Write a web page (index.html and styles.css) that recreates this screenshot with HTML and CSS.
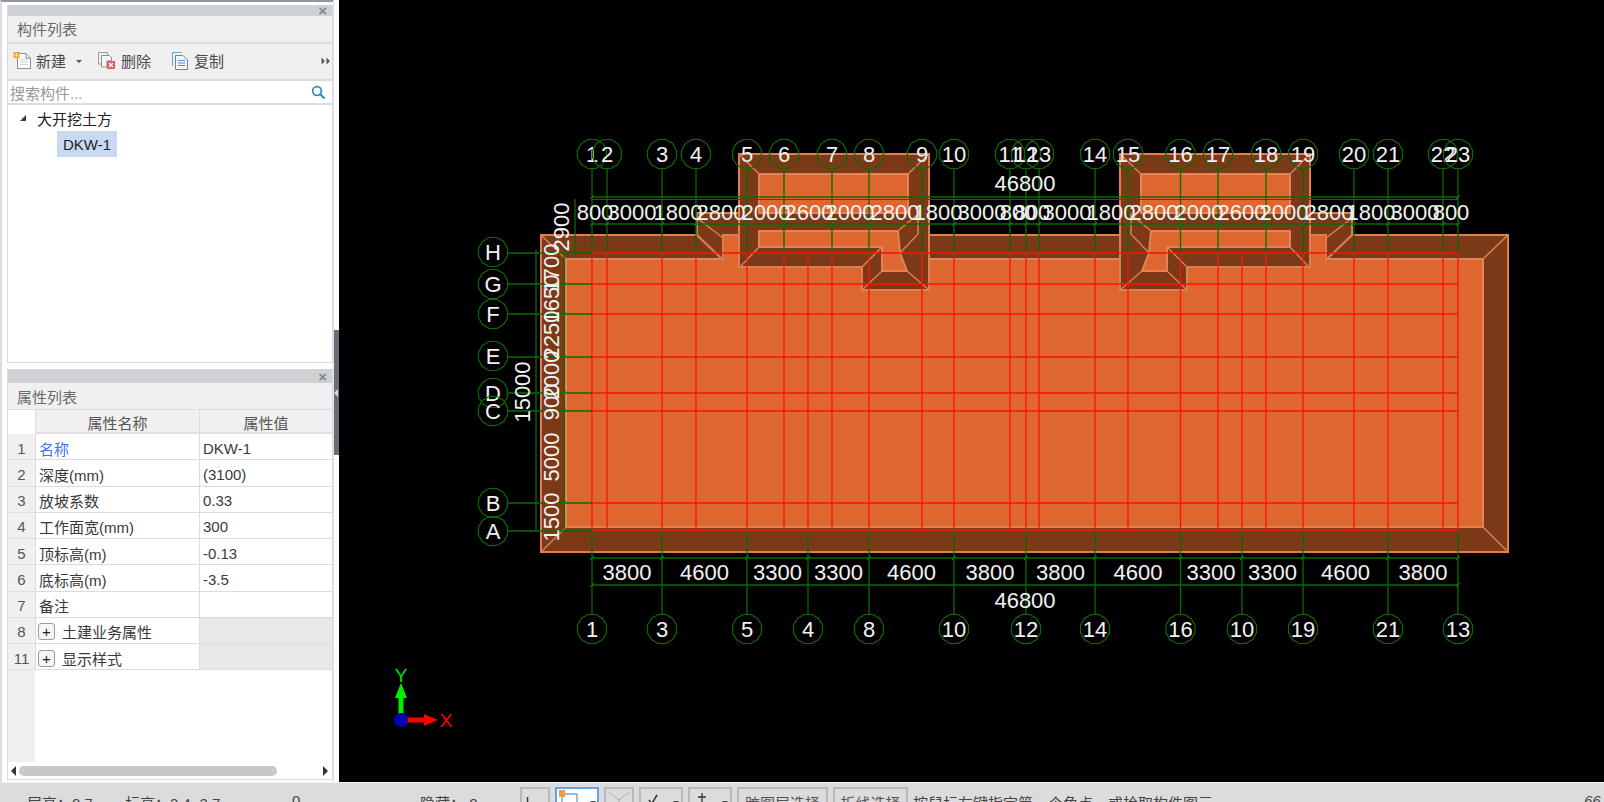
FILE: index.html
```html
<!DOCTYPE html>
<html lang="zh-CN">

<head>
  <meta charset="UTF-8" />
  <title>构件列表</title>
  <link rel="stylesheet" href="styles.css">
</head>

<body>
  <div class="app">
    <div class="main">
      <div class="sidebar">
        <!-- Component list -->
        <div class="panel panel-list">
          <div class="panel-head"><span class="panel-close">×</span></div>
          <div class="panel-title">构件列表</div>
          <div class="toolbar">
            <div class="tool">
              <svg class="tool-icon" width="19" height="19" viewBox="0 0 19 19">
                <path d="M4.5 2.5H13L17.5 7V17.5H4.5Z" fill="#fbfbfb" stroke="#8d8d8d" />
                <path d="M7 8.5H15M7 11H15M7 13.500H15" stroke="#d5d5d5" />
                <path d="M13 2.500V7H17.5" fill="#e6e6e6" stroke="#8d8d8d" />
                <rect x="0.500" y="1" width="6" height="6" fill="#f6a23c" />
                <path d="M1.500 4H5.500M3.500 2V6" stroke="#ffe2a8" />
              </svg>
              <span>新建</span>
              <span class="tool-caret"></span>
            </div>
            <div class="tool tool-del">
              <svg class="tool-icon" width="18" height="18" viewBox="0 0 18 18">
                <path d="M0.500 0.500H9.500V3M0.500 0.500V12H3" fill="none" stroke="#9a9a9a" />
                <path d="M3.500 3.500H11.500L13.500 5.500V9H9V15H3.500Z" fill="#f6f6f6" stroke="#8d8d8d" />
                <rect x="9" y="9" width="8" height="8" fill="#dc5b5b" />
                <path d="M11 11L15 15M15 11L11 15" stroke="#fff" stroke-width="1.300" />
              </svg>
              <span>删除</span>
            </div>
            <div class="tool tool-copy">
              <svg class="tool-icon" width="17" height="18" viewBox="0 0 17 18">
                <path d="M0.500 0.500H9.500M0.500 0.500V14" fill="none" stroke="#6ea2d8" />
                <path d="M3.500 3.500H11L15.500 8V17.500H3.500Z" fill="#f3f8fd" stroke="#4e8ccb" />
                <path d="M6 8.500H13M6 11H13M6 13.500H13" stroke="#4e8ccb" />
              </svg>
              <span>复制</span>
            </div>
            <div class="tool-more">
              <svg width="10" height="8" viewBox="0 0 10 8">
                <path d="M0.500 0.500L4 4L0.500 7.500ZM5.500 0.500L9 4L5.500 7.500Z" fill="#555" />
              </svg>
            </div>
          </div>
          <div class="search">
            <span class="search-text">搜索构件...</span>
            <svg width="15" height="15" viewBox="0 0 15 15">
              <circle cx="6" cy="6" r="4.300" fill="none" stroke="#2f8fc4" stroke-width="1.800" />
              <path d="M9.300 9.300L13.500 13.500" stroke="#2f8fc4" stroke-width="2.200" />
            </svg>
          </div>
          <div class="tree">
            <div class="tree-row"><span class="twisty"></span>大开挖土方</div>
            <div class="tree-leaf">DKW-1</div>
          </div>
        </div>

        <!-- Property list -->
        <div class="panel panel-props">
          <div class="panel-head panel-head-props"><span class="panel-close">×</span></div>
          <div class="panel-title panel-title-props">属性列表</div>
          <div class="prop-grid">
            <div class="cell-corner"></div>
            <div class="cell-head">属性名称</div>
            <div class="cell-head">属性值</div>

            <div class="cell-num">1</div>
            <div class="cell cell-link">名称</div>
            <div class="cell">DKW-1</div>

            <div class="cell-num">2</div>
            <div class="cell">深度(mm)</div>
            <div class="cell">(3100)</div>

            <div class="cell-num">3</div>
            <div class="cell">放坡系数</div>
            <div class="cell">0.33</div>

            <div class="cell-num">4</div>
            <div class="cell">工作面宽(mm)</div>
            <div class="cell">300</div>

            <div class="cell-num">5</div>
            <div class="cell">顶标高(m)</div>
            <div class="cell">-0.13</div>

            <div class="cell-num">6</div>
            <div class="cell">底标高(m)</div>
            <div class="cell">-3.5</div>

            <div class="cell-num">7</div>
            <div class="cell">备注</div>
            <div class="cell"></div>

            <div class="cell-num">8</div>
            <div class="cell"><span class="plus">+</span>土建业务属性</div>
            <div class="cell cell-off"></div>

            <div class="cell-num">11</div>
            <div class="cell"><span class="plus">+</span>显示样式</div>
            <div class="cell cell-off"></div>
          </div>
          <div class="prop-empty"><div class="prop-gutter"></div></div>
          <div class="hscroll">
            <span class="arrow-left"></span>
            <span class="hscroll-thumb"></span>
            <span class="arrow-right"></span>
          </div>
        </div>
      </div>

      <div class="splitter">
        <div class="splitter-bar"><span class="splitter-notch"></span></div>
      </div>

      <!-- Drawing area: svg coordinates are page coordinates -->
      <svg class="canvas" width="1265" height="782" viewBox="339 0 1265 782">
        <defs>
          <polygon id="ax" class="ax" points="14.500,3.900 10.600,10.600 3.900,14.500 -3.900,14.500 -10.600,10.600 -14.500,3.900 -14.500,-3.900 -10.600,-10.600 -3.900,-14.500 3.900,-14.500 10.600,-10.600 14.500,-3.900" />
          <marker id="tick" markerUnits="userSpaceOnUse" markerWidth="8" markerHeight="8" refX="4" refY="4">
            <path d="M2 6L6 2" class="tick" />
          </marker>
          <g id="wing">
            <polygon class="slope" points="697,213 739,213 739,235 723,235 723,260 697,235" />
            <rect class="pit-flat" x="723" y="236" width="16" height="25" />
            <path class="fold" d="M697 218L723 238V260L697 235" />
            <polygon class="slope" points="739,154 929,154 929,290 862,290 862,267 739,267" />
            <rect class="pit" x="759" y="174" width="149" height="39" />
            <polygon class="pit" points="759,231 898,231 900,253 907,271 882,271 882,247 759,247" />
            <path class="fold" d="M739 154L759 174M929 154L908 174M741 266L759 247M862 267L882 247M862 290L882 271M929 290L907 271M917 215L898 231M917 235L900 253M918 213V235" />
          </g>
        </defs>

        <rect class="slope" x="541" y="235" width="967" height="317" />
        <rect class="pit" x="566" y="259" width="917" height="268" />
        <path class="fold" d="M541 235L566 259M1508 235L1483 259M541 552L566 527M1508 552L1483 527" />
        <use href="#wing" />
        <use href="#wing" transform="translate(2049 0) scale(-1 1)" />

        <!-- red axis grid -->
        <path class="grid" d="M592 253H1458M592 284H1458M592 314H1458M592 357H1458M592 393H1458M592 411H1458M592 503H1458M592 530H1458
          M592 253V530M607 253V530M662 253V530M696 253V530M747 253V530M784 253V530M808 253V530M832 253V530M869 253V530M922 253V530M954 253V530
          M1010 253V530M1026 253V530M1039 253V530M1095 253V530M1128 253V530M1180.500 253V530M1218 253V530M1242 253V530M1266 253V530M1303 253V530M1354 253V530M1388 253V530M1443 253V530M1458 253V530" />

        <!-- green leaders and dimension lines -->
        <path class="leader" d="M592 169V253M607 169V253M662 169V253M696 169V253M747 169V253M784 169V253M832 169V253M869 169V253M922 169V253M954 169V253
          M1010 169V253M1026 169V253M1039 169V253M1095 169V253M1128 169V253M1180.500 169V253M1218 169V253M1266 169V253M1303 169V253M1354 169V253M1388 169V253M1443 169V253M1458 169V253
          M592 530V614M662 530V614M747 530V614M808 530V614M869 530V614M954 530V614M1026 530V614M1095 530V614M1180.500 530V614M1242 530V614M1303 530V614M1388 530V614M1458 530V614
          M508 253H592M508 284H592M508 314H592M508 357H592M508 393H592M508 411H592M508 503H592M508 531H592
          M575 199V253M536 250V531" />
        <path class="grid-dark" d="M592 199.500H1458" />
        <polyline class="dim" points="592,197 1458,197" />
        <polyline class="dim" points="592,224 607,224 662,224 696,224 747,224 784,224 832,224 869,224 922,224 954,224 1010,224 1026,224 1039,224 1095,224 1128,224 1180.500,224 1218,224 1266,224 1303,224 1354,224 1388,224 1443,224 1458,224" />
        <polyline class="dim" points="592,558 662,558 747,558 808,558 869,558 954,558 1026,558 1095,558 1180.500,558 1242,558 1303,558 1388,558 1458,558" />
        <polyline class="dim" points="592,585 1458,585" />
        <polyline class="dim" points="564,253 564,284 564,314 564,357 564,393 564,411 564,503 564,531" />

        <!-- top axes -->
        <use href="#ax" x="592" y="154" /><text class="lbl" x="592" y="162">1</text>
        <use href="#ax" x="607" y="154" /><text class="lbl" x="607" y="162">2</text>
        <use href="#ax" x="662" y="154" /><text class="lbl" x="662" y="162">3</text>
        <use href="#ax" x="696" y="154" /><text class="lbl" x="696" y="162">4</text>
        <use href="#ax" x="747" y="154" /><text class="lbl" x="747" y="162">5</text>
        <use href="#ax" x="784" y="154" /><text class="lbl" x="784" y="162">6</text>
        <use href="#ax" x="832" y="154" /><text class="lbl" x="832" y="162">7</text>
        <use href="#ax" x="869" y="154" /><text class="lbl" x="869" y="162">8</text>
        <use href="#ax" x="922" y="154" /><text class="lbl" x="922" y="162">9</text>
        <use href="#ax" x="954" y="154" /><text class="lbl" x="954" y="162">10</text>
        <use href="#ax" x="1010" y="154" /><text class="lbl" x="1010" y="162">11</text>
        <use href="#ax" x="1026" y="154" /><text class="lbl" x="1026" y="162">12</text>
        <use href="#ax" x="1039" y="154" /><text class="lbl" x="1039" y="162">13</text>
        <use href="#ax" x="1095" y="154" /><text class="lbl" x="1095" y="162">14</text>
        <use href="#ax" x="1128" y="154" /><text class="lbl" x="1128" y="162">15</text>
        <use href="#ax" x="1180.500" y="154" /><text class="lbl" x="1180.500" y="162">16</text>
        <use href="#ax" x="1218" y="154" /><text class="lbl" x="1218" y="162">17</text>
        <use href="#ax" x="1266" y="154" /><text class="lbl" x="1266" y="162">18</text>
        <use href="#ax" x="1303" y="154" /><text class="lbl" x="1303" y="162">19</text>
        <use href="#ax" x="1354" y="154" /><text class="lbl" x="1354" y="162">20</text>
        <use href="#ax" x="1388" y="154" /><text class="lbl" x="1388" y="162">21</text>
        <use href="#ax" x="1443" y="154" /><text class="lbl" x="1443" y="162">22</text>
        <use href="#ax" x="1458" y="154" /><text class="lbl" x="1458" y="162">23</text>

        <!-- bottom axes -->
        <use href="#ax" x="592" y="629" /><text class="lbl" x="592" y="637">1</text>
        <use href="#ax" x="662" y="629" /><text class="lbl" x="662" y="637">3</text>
        <use href="#ax" x="747" y="629" /><text class="lbl" x="747" y="637">5</text>
        <use href="#ax" x="808" y="629" /><text class="lbl" x="808" y="637">4</text>
        <use href="#ax" x="869" y="629" /><text class="lbl" x="869" y="637">8</text>
        <use href="#ax" x="954" y="629" /><text class="lbl" x="954" y="637">10</text>
        <use href="#ax" x="1026" y="629" /><text class="lbl" x="1026" y="637">12</text>
        <use href="#ax" x="1095" y="629" /><text class="lbl" x="1095" y="637">14</text>
        <use href="#ax" x="1180.500" y="629" /><text class="lbl" x="1180.500" y="637">16</text>
        <use href="#ax" x="1242" y="629" /><text class="lbl" x="1242" y="637">10</text>
        <use href="#ax" x="1303" y="629" /><text class="lbl" x="1303" y="637">19</text>
        <use href="#ax" x="1388" y="629" /><text class="lbl" x="1388" y="637">21</text>
        <use href="#ax" x="1458" y="629" /><text class="lbl" x="1458" y="637">13</text>

        <!-- left axes -->
        <use href="#ax" x="493" y="252" /><text class="lbl" x="493" y="260">H</text>
        <use href="#ax" x="493" y="284" /><text class="lbl" x="493" y="292">G</text>
        <use href="#ax" x="493" y="314" /><text class="lbl" x="493" y="322">F</text>
        <use href="#ax" x="493" y="356" /><text class="lbl" x="493" y="364">E</text>
        <use href="#ax" x="493" y="393" /><text class="lbl" x="493" y="401">D</text>
        <use href="#ax" x="493" y="411" /><text class="lbl" x="493" y="419">C</text>
        <use href="#ax" x="493" y="503" /><text class="lbl" x="493" y="511">B</text>
        <use href="#ax" x="493" y="531" /><text class="lbl" x="493" y="539">A</text>

        <!-- top dimensions -->
        <text class="lbl" x="1025" y="191">46800</text>
        <text class="lbl" x="595" y="220">800</text>
        <text class="lbl" x="632" y="220">3000</text>
        <text class="lbl" x="678" y="220">1800</text>
        <text class="lbl" x="721" y="220">2800</text>
        <text class="lbl" x="766" y="220">2000</text>
        <text class="lbl" x="809" y="220">2600</text>
        <text class="lbl" x="850" y="220">2000</text>
        <text class="lbl" x="895" y="220">2800</text>
        <text class="lbl" x="938" y="220">1800</text>
        <text class="lbl" x="982" y="220">3000</text>
        <text class="lbl" x="1018" y="220">800</text>
        <text class="lbl" x="1032" y="220">800</text>
        <text class="lbl" x="1067" y="220">3000</text>
        <text class="lbl" x="1111" y="220">1800</text>
        <text class="lbl" x="1154" y="220">2800</text>
        <text class="lbl" x="1199" y="220">2000</text>
        <text class="lbl" x="1242" y="220">2600</text>
        <text class="lbl" x="1284" y="220">2000</text>
        <text class="lbl" x="1329" y="220">2800</text>
        <text class="lbl" x="1371" y="220">1800</text>
        <text class="lbl" x="1415" y="220">3000</text>
        <text class="lbl" x="1451" y="220">800</text>

        <!-- bottom dimensions -->
        <text class="lbl" x="627" y="580">3800</text>
        <text class="lbl" x="704.500" y="580">4600</text>
        <text class="lbl" x="777.500" y="580">3300</text>
        <text class="lbl" x="838.500" y="580">3300</text>
        <text class="lbl" x="911.500" y="580">4600</text>
        <text class="lbl" x="990" y="580">3800</text>
        <text class="lbl" x="1060.500" y="580">3800</text>
        <text class="lbl" x="1138" y="580">4600</text>
        <text class="lbl" x="1211" y="580">3300</text>
        <text class="lbl" x="1272.500" y="580">3300</text>
        <text class="lbl" x="1345.500" y="580">4600</text>
        <text class="lbl" x="1423" y="580">3800</text>
        <text class="lbl" x="1025" y="608">46800</text>

        <!-- left dimensions, rotated -->
        <text class="lbl" transform="translate(522 392) rotate(-90)" y="8">15000</text>
        <text class="lbl" transform="translate(561 227) rotate(-90)" y="8">2900</text>
        <text class="lbl" transform="translate(551 268) rotate(-90)" y="8">1700</text>
        <text class="lbl" transform="translate(551 299) rotate(-90)" y="8">1650</text>
        <text class="lbl" transform="translate(551 335) rotate(-90)" y="8">2250</text>
        <text class="lbl" transform="translate(551 375) rotate(-90)" y="8">2000</text>
        <text class="lbl" transform="translate(551 402) rotate(-90)" y="8">900</text>
        <text class="lbl" transform="translate(551 457) rotate(-90)" y="8">5000</text>
        <text class="lbl" transform="translate(551 517) rotate(-90)" y="8">1500</text>

        <!-- coordinate indicator -->
        <path class="arrow-y" d="M398.500 720V698H395L401 683L407 698H403.500V720Z" />
        <path class="arrow-x" d="M401 717.500H424V714L438 720L424 726V722.500H401Z" />
        <circle class="origin" cx="401" cy="720" r="7" />
        <text class="axis-y" x="401" y="682">Y</text>
        <text class="axis-x" x="446" y="727">X</text>
      </svg>
    </div>

    <!-- Status bar, cut off by the window edge -->
    <div class="statusbar">
      <span class="st st-floor">层高：0.7</span>
      <span class="st st-elev">标高：3.4~3.7</span>
      <span class="st st-zero">0</span>
      <span class="st st-hide">隐藏：&nbsp;0</span>
      <div class="st-btn st-btn-a">
        <svg width="28" height="16" viewBox="0 0 28 16"><path d="M6 8V16" stroke="#333" stroke-width="1.500" /></svg>
      </div>
      <div class="st-btn st-btn-b st-btn-on">
        <svg width="40" height="16" viewBox="0 0 40 16">
          <path d="M5 5H20V16M5 5V16" fill="none" stroke="#3c78c8" />
          <rect x="2" y="1" width="6" height="7" fill="#f39a4a" />
          <path d="M33 12H39L36 15Z" fill="#444" />
        </svg>
      </div>
      <div class="st-btn st-btn-a">
        <svg width="28" height="16" viewBox="0 0 28 16"><path d="M3 3L14 11L25 3M14 11V16" fill="none" stroke="#a9a9a9" /></svg>
      </div>
      <div class="st-btn st-btn-b">
        <svg width="40" height="16" viewBox="0 0 40 16">
          <path d="M10 16L16 6M8 11L11 15" fill="none" stroke="#333" stroke-width="1.500" />
          <path d="M32 12H38L35 15Z" fill="#444" />
        </svg>
      </div>
      <div class="st-btn st-btn-b">
        <svg width="40" height="16" viewBox="0 0 40 16">
          <path d="M8 8H16M12 4V16" fill="none" stroke="#333" stroke-width="1.300" />
          <path d="M32 12H38L35 15Z" fill="#444" />
        </svg>
      </div>
      <div class="st-btn st-btn-text st-btn-layer">跨图层选择</div>
      <div class="st-btn st-btn-text st-btn-poly">折线选择</div>
      <span class="st st-hint">按鼠标左键指定第一个角点，或拾取构件图元</span>
      <span class="st st-num">66</span>
    </div>
  </div>
</body>

</html>
```

FILE: styles.css
```css
* {
  margin: 0;
  padding: 0;
  box-sizing: border-box;
}

body {
  width: 1604px;
  height: 802px;
  overflow: hidden;
  background: #dcdcde;
  font-family: "Liberation Sans", "Noto Sans CJK SC", sans-serif;
  font-size: 15px;
  color: #333;
}

.app {
  display: flex;
  flex-direction: column;
  height: 802px;
  overflow: hidden;
}

.main {
  display: flex;
  height: 782px;
}

/* Left side */
.sidebar {
  display: flex;
  flex-direction: column;
  gap: 6px;
  width: 333px;
  padding: 3px 0 2px 5px;
  background: #fff;
  border-top: 2px solid #8f989e;
  border-left: 2px solid #dcdcde;
}

.panel {
  display: flex;
  flex-direction: column;
  border: 1px solid #d8dadd;
  border-top: none;
  background: #fff;
}

.panel-list {
  height: 358px;
}

.panel-props {
  height: 411px;
}

.panel-head {
  display: flex;
  justify-content: flex-end;
  align-items: center;
  height: 11px;
  padding-right: 5px;
  background: #cfd1d5;
}

.panel-head-props {
  height: 14px;
}

.panel-close {
  font-size: 15px;
  line-height: 11px;
  font-weight: bold;
  color: #858585;
}

.panel-title {
  display: flex;
  align-items: center;
  height: 28px;
  padding: 0 0 2px 9px;
  background: #f0f0f0;
  border-bottom: 2px solid #dcdcdc;
  color: #6a6a6a;
}

.panel-title-props {
  height: 27px;
  padding-bottom: 0;
  border-bottom: 1px solid #dcdcdc;
}

.toolbar {
  display: flex;
  align-items: center;
  height: 37px;
  padding: 0 0 2px 5px;
  background: #f0f0f0;
  border-bottom: 2px solid #dcdcdc;
  color: #4a4a4a;
}

.tool {
  display: flex;
  align-items: center;
  gap: 4px;
}

.tool-del {
  margin-left: 16px;
  gap: 5px;
}

.tool-copy {
  margin-left: 21px;
  gap: 5px;
}

.tool-caret {
  width: 0;
  height: 0;
  margin: 2px 0 0 6px;
  border-style: solid;
  border-width: 3px 3.5px 0 3.5px;
  border-color: #555 transparent transparent transparent;
}

.tool-more {
  display: flex;
  margin-left: auto;
  padding-right: 1px;
}

.search {
  display: flex;
  align-items: center;
  justify-content: space-between;
  height: 24px;
  padding: 0 6px 0 2px;
  border-bottom: 2px solid #dcdcdc;
}

.search-text {
  color: #999;
}

.tree {
  flex: 1;
}

.tree-row {
  display: flex;
  align-items: center;
  height: 26px;
  padding-left: 12px;
  color: #222;
}

.twisty {
  width: 0;
  height: 0;
  margin-right: 11px;
  border-style: solid;
  border-width: 0 0 6px 6px;
  border-color: transparent transparent #3a3a3a transparent;
}

.tree-leaf {
  display: flex;
  align-items: center;
  width: 60px;
  height: 26px;
  margin-left: 49px;
  padding-left: 6px;
  background: #c8daf1;
  color: #222;
}

/* Property grid */
.prop-grid {
  display: grid;
  grid-template-columns: 27px 164px 1fr;
  grid-template-rows: 24px repeat(9, 26.25px);
}

.cell-corner {
  background: #fff;
}

.cell-head {
  display: flex;
  align-items: center;
  justify-content: center;
  padding-top: 2px;
  background: #f0f0f0;
  border-left: 1px solid #dcdcdc;
  border-bottom: 2px solid #dfe1e4;
  color: #555;
}

.cell-num {
  display: flex;
  align-items: center;
  justify-content: center;
  padding-top: 3px;
  background: #f0f0f0;
  border-bottom: 1px solid #e0e0e0;
  color: #555;
}

.cell {
  display: flex;
  align-items: center;
  padding: 3px 0 0 3px;
  border-left: 1px solid #d9dbde;
  border-bottom: 1.500px solid #d9dbde;
  color: #3a3a3a;
}

.cell-link {
  color: #3f6ff0;
}

.cell-off {
  background: #e8e8e8;
}

.plus {
  display: flex;
  align-items: center;
  justify-content: center;
  width: 17px;
  height: 17px;
  margin: 0 7px 0 -1px;
  border: 1px solid #9a9a9a;
  border-radius: 3px;
  background: #f6f6f6;
  color: #222;
}

.prop-empty {
  flex: 1;
}

.prop-gutter {
  width: 27px;
  height: 100%;
  background: #f0f0f0;
}

.hscroll {
  display: flex;
  align-items: center;
  height: 17px;
  padding: 0 2px 0 2px;
}

.arrow-left {
  width: 0;
  height: 0;
  border-style: solid;
  border-width: 5px 5px 5px 0;
  border-color: transparent #333 transparent transparent;
  margin-left: 1px;
}

.hscroll-thumb {
  width: 258px;
  height: 10px;
  margin-left: 3px;
  border-radius: 5px;
  background: #c8c8c8;
}

.arrow-right {
  width: 0;
  height: 0;
  margin-left: auto;
  margin-right: 2px;
  border-style: solid;
  border-width: 5px 0 5px 5px;
  border-color: transparent transparent transparent #333;
}

.splitter {
  width: 6px;
  padding-top: 330px;
  background: #fff;
  border-left: 1px solid #dfe1e4;
}

.splitter-bar {
  display: flex;
  align-items: center;
  height: 125px;
  background: #657079;
}

.splitter-notch {
  width: 0;
  height: 0;
  border-style: solid;
  border-width: 4px 4px 4px 0;
  border-color: transparent #d5d8da transparent transparent;
}

/* Drawing */
.canvas {
  display: block;
  flex: none;
  background: #000;
}

.slope {
  fill: #7b3918;
  stroke: #dc7f52;
  stroke-width: 2;
}

.pit {
  fill: #dd672e;
  stroke: #e2845a;
  stroke-width: 2;
}

.pit-flat {
  fill: #dd672e;
}

.fold {
  fill: none;
  stroke: #dc7f52;
  stroke-width: 1.500;
}

.grid {
  fill: none;
  stroke: #ff1208;
  stroke-width: 1.300;
}

.grid-dark {
  stroke: #a81c08;
  stroke-width: 1;
}

.leader {
  fill: none;
  stroke: #0b6a00;
  stroke-width: 1.300;
}

.dim {
  fill: none;
  stroke: #0b6a00;
  stroke-width: 1.300;
  marker-start: url(#tick);
  marker-mid: url(#tick);
  marker-end: url(#tick);
}

.tick {
  fill: none;
  stroke: #0b8a00;
  stroke-width: 1;
}

.ax {
  fill: none;
  stroke: #0b6a00;
  stroke-width: 1.200;
}

.lbl {
  fill: #f2f2f2;
  font-size: 22px;
  text-anchor: middle;
}

.arrow-y {
  fill: #00f000;
}

.arrow-x {
  fill: #ff0000;
}

.origin {
  fill: #0000b4;
}

.axis-y {
  fill: #00e000;
  font-size: 19px;
  text-anchor: middle;
}

.axis-x {
  fill: #f00;
  font-size: 19px;
  text-anchor: middle;
}

/* Status bar */
.statusbar {
  display: flex;
  align-items: flex-start;
  height: 20px;
  padding-left: 27px;
  overflow: hidden;
  background: #dcdcde;
  border-top: 1px solid #f2f2f2;
}

.st {
  flex: none;
  margin-top: 9px;
  color: #444;
  white-space: nowrap;
}

.st-floor {
  width: 98px;
}

.st-elev {
  width: 167px;
}

.st-zero {
  width: 128px;
}

.st-hide {
  width: 100px;
}

.st-btn {
  display: flex;
  flex: none;
  height: 20px;
  margin: 4px 5px 0 0;
  background: #dcdcde;
  border: 2px solid #b9b9b9;
  border-bottom: none;
}

.st-btn-a {
  width: 30px;
}

.st-btn-b {
  width: 44px;
}

.st-btn-on {
  background: #fff;
  border-color: #5aa6e8;
}

.st-btn-text {
  justify-content: center;
  padding-top: 3px;
  color: #555;
}

.st-btn-layer {
  width: 91px;
}

.st-btn-poly {
  width: 75px;
}

.st-hint {
  width: 671px;
}

.st-num {
  font-style: italic;
}
```
